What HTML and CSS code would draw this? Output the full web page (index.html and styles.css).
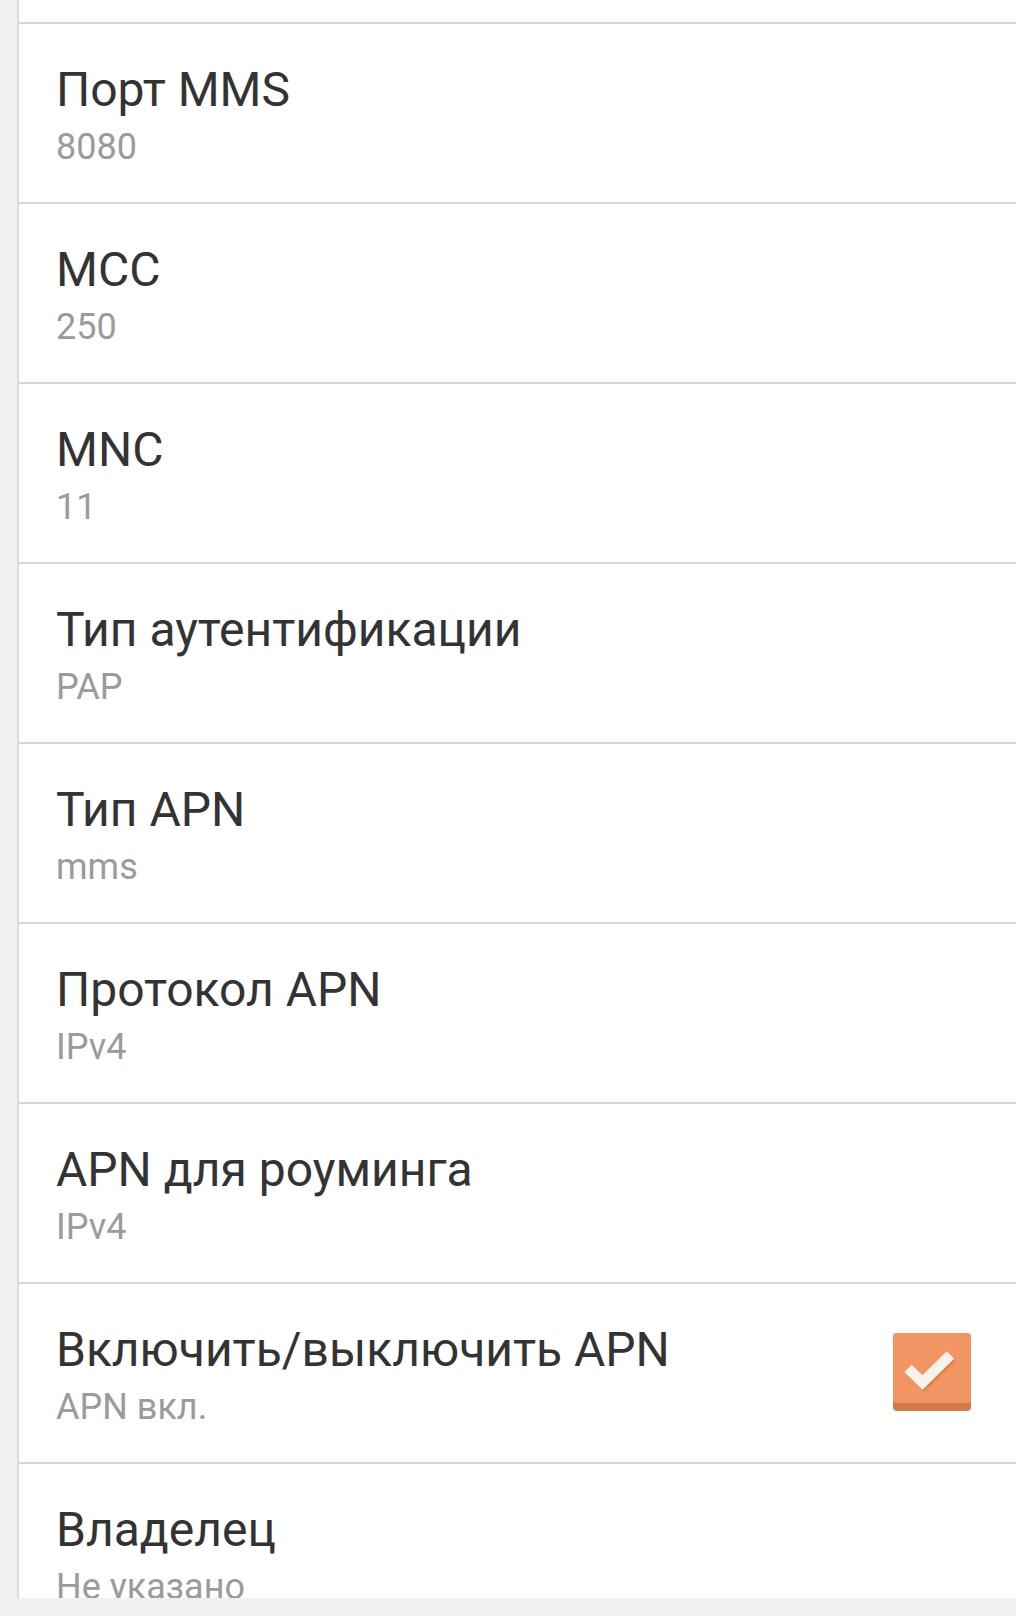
FILE: index.html
```html
<!DOCTYPE html>
<html lang="ru">
<head>
<meta charset="utf-8">
<title>APN</title>
<link rel="stylesheet" href="styles.css">
</head>
<body>
<div class="screen">
  <div class="main">
    <div class="gutter"></div>
    <div class="panel">
      <div class="top-fill"></div>
      <div class="row"><div class="text"><div class="title">Порт MMS</div><div class="summary">8080</div></div></div>
      <div class="row"><div class="text"><div class="title">MCC</div><div class="summary">250</div></div></div>
      <div class="row"><div class="text"><div class="title">MNC</div><div class="summary">11</div></div></div>
      <div class="row"><div class="text"><div class="title">Тип аутентификации</div><div class="summary">PAP</div></div></div>
      <div class="row"><div class="text"><div class="title">Тип APN</div><div class="summary">mms</div></div></div>
      <div class="row"><div class="text"><div class="title">Протокол APN</div><div class="summary">IPv4</div></div></div>
      <div class="row"><div class="text"><div class="title">APN для роуминга</div><div class="summary">IPv4</div></div></div>
      <div class="row row-check">
        <div class="text"><div class="title">Включить/выключить APN</div><div class="summary">APN вкл.</div></div>
        <svg class="checkbox" width="78" height="78" viewBox="0 0 78 78">
          <rect x="0" y="0" width="78" height="78" rx="4" fill="#d47a4c"/>
          <rect x="0" y="0" width="78" height="70" rx="4" fill="#f29562"/>
          <polyline points="16.5,37.5 31,51.5 59,24" fill="none" stroke="#c8703f" stroke-opacity="0.55" stroke-width="10.5" stroke-linejoin="miter"/>
          <polyline points="15,35.5 29.5,49.5 57.5,22" fill="none" stroke="#f6f3ec" stroke-width="10.5" stroke-linejoin="miter"/>
        </svg>
      </div>
      <div class="row"><div class="text"><div class="title">Владелец</div><div class="summary">Не указано</div></div></div>
    </div>
  </div>
  <div class="bottom"></div>
</div>
</body>
</html>
```

FILE: styles.css
```css
html, body {
  margin: 0;
  padding: 0;
  background: #f0f0f0;
}
body {
  font-family: Roboto, "Noto Sans", "DejaVu Sans", sans-serif;
}
.screen {
  width: 1016px;
  height: 1616px;
  display: flex;
  flex-direction: column;
}
.main {
  height: 1598px;
  display: flex;
  flex-direction: row;
}
.gutter {
  width: 17px;
  background: #f0f0f0;
  flex: none;
}
.panel {
  flex: 1;
  background: #ffffff;
  border-left: 2px solid #dcdcdc;
  overflow: hidden;
  display: flex;
  flex-direction: column;
}
.top-fill {
  height: 22px;
  flex: none;
}
.row {
  flex: none;
  height: 180px;
  box-sizing: border-box;
  border-top: 2px solid #d7d7d7;
  padding: 38px 45px 0 37px;
  display: flex;
  flex-direction: row;
  align-items: flex-start;
}
.text {
  flex: 1;
}
.title {
  font-size: 48px;
  line-height: 56px;
  color: #333333;
  white-space: nowrap;
}
.summary {
  font-size: 36px;
  line-height: 42px;
  margin-top: 8px;
  color: #9b9b9b;
  white-space: nowrap;
}
.checkbox {
  flex: none;
  margin-top: 11px;
  display: block;
}
.bottom {
  height: 18px;
  background: #f0f0f0;
}
```
